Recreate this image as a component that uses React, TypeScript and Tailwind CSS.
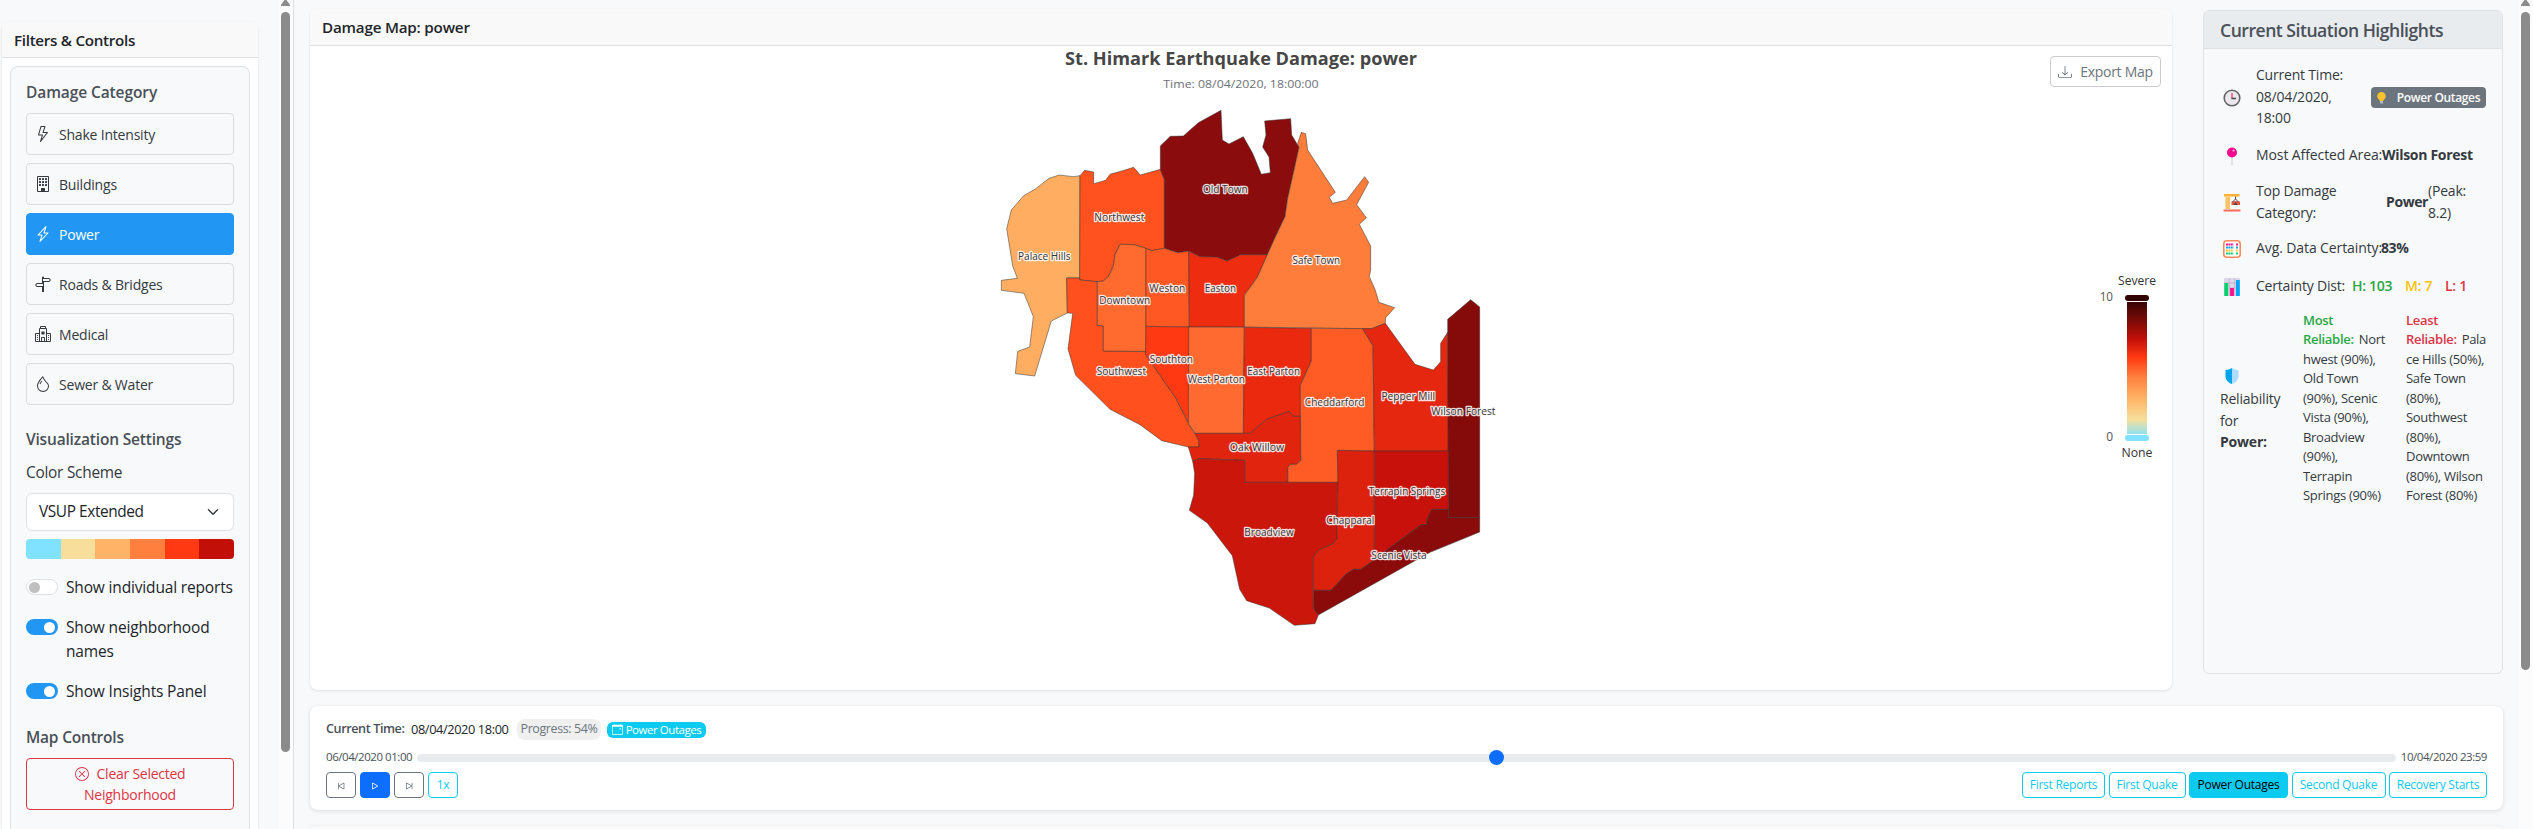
import React from "react";
import {
  BsLightning, BsBuilding, BsLightningCharge, BsSignpostSplit, BsHospital, BsDroplet,
  BsChevronDown, BsXCircle, BsDownload, BsSkipStart, BsPlay, BsSkipEnd, BsCalendarEvent,
} from "react-icons/bs";

const categories = [
  { label: "Shake Intensity", Icon: BsLightning },
  { label: "Buildings", Icon: BsBuilding },
  { label: "Power", Icon: BsLightningCharge, active: true },
  { label: "Roads & Bridges", Icon: BsSignpostSplit },
  { label: "Medical", Icon: BsHospital },
  { label: "Sewer & Water", Icon: BsDroplet },
];

// Map geometry is stored at three units per screen pixel.
const regions = [
  { fill: "#ffad60", pts: "300,437 280,440 238,435 207,445 166,477 131,497 94,540 80,596 98,708 112,745 64,751 64,781 132,790 160,860 149,951 113,964 106,1031 164,1038 214,873 262,849 260,744 299,744" },
  { fill: "#ff521e", pts: "300,437 314,421 341,426 341,461 377,451 390,433 425,423 461,412 481,435 541,418 553,448 553,655 515,662 498,655 462,644 420,643 405,674 400,708 385,740 370,753 352,755 299,750" },
  { fill: "#8b0c0c", pts: "723,241 727,330 747,342 790,320 818,370 844,433 871,428 867,381 848,351 858,315 854,273 932,266 935,315 957,352 940,430 923,505 915,560 890,612 862,674 782,674 741,693 710,681 660,680 626,663 593,668 553,655 553,448 541,418 541,348 571,319 610,318 655,278" },
  { fill: "#ff501d", pts: "260,744 299,744 299,750 352,755 352,886 370,888 370,963 497,964 497,973 588,1105 625,1180 645,1212 656,1232 657,1251 625,1251 545,1232 480,1184 390,1138 287,1036 264,957 278,850 262,849" },
  { fill: "#ff6a2f", pts: "352,755 370,753 385,740 400,708 405,674 420,643 462,644 498,655 498,964 370,963 370,888 352,886" },
  { fill: "#ff5822", pts: "498,655 515,662 553,655 593,668 626,663 628,891 498,889" },
  { fill: "#ee2c10", pts: "626,663 660,680 710,681 741,693 782,674 862,674 832,742 793,796 793,891 628,891" },
  { fill: "#ff7d3a", pts: "953,340 964,307 977,311 983,360 1066,487 1048,502 1058,520 1100,510 1154,440 1166,457 1130,524 1159,563 1138,583 1172,648 1172,720 1168,740 1185,778 1197,817 1244,833 1217,863 1216,880 1175,896 1148,896 793,891 793,796 832,742 862,674 890,612 915,560 923,505 940,430 957,352" },
  { fill: "#ff3a13", pts: "498,889 628,891 626,1180 588,1105 497,973" },
  { fill: "#ff6a30", pts: "626,891 793,892 790,1210 645,1210 625,1180" },
  { fill: "#ea290f", pts: "793,892 994,895 994,993 961,1066 961,1159 940,1159 928,1144 860,1168 810,1210 790,1210" },
  { fill: "#ff5c25", pts: "994,895 1148,896 1179,947 1183,1263 1072,1261 1074,1357 923,1357 923,1312 930,1302 950,1302 962,1290 961,1066 994,993" },
  { fill: "#e5270f", pts: "1148,896 1175,896 1216,880 1305,1003 1360,1020 1382,995 1382,940 1403,907 1405,1263 1183,1263 1179,947" },
  { fill: "#850b0b", pts: "1403,868 1472,809 1499,831 1499,1463 1405,1463" },
  { fill: "#e0240e", pts: "645,1210 790,1210 810,1210 860,1168 928,1144 940,1159 961,1159 962,1290 950,1302 930,1302 923,1312 923,1357 794,1357 794,1291 657,1286 638,1294 625,1251 657,1251 656,1232" },
  { fill: "#cb170b", pts: "638,1294 657,1286 794,1291 794,1357 1074,1357 1071,1527 1060,1541 1015,1561 1001,1580 1000,1736 1015,1755 1005,1781 943,1786 868,1734 800,1712 779,1678 757,1577 682,1479 628,1441 641,1395 644,1330" },
  { fill: "#dc210d", pts: "1072,1261 1183,1263 1183,1590 1142,1618 1120,1618 1097,1633 1053,1681 1001,1681 1001,1580 1015,1561 1060,1541 1071,1527 1074,1357" },
  { fill: "#c7110a", pts: "1183,1263 1405,1263 1405,1438 1355,1438 1342,1465 1340,1484 1323,1484 1220,1560 1183,1590" },
  { fill: "#8b0b0b", pts: "1001,1681 1053,1681 1097,1633 1120,1618 1142,1618 1183,1590 1220,1560 1323,1484 1340,1484 1342,1465 1355,1438 1405,1438 1405,1463 1499,1463 1499,1506 1350,1567 1015,1755 1000,1736" },
];

const labels: [string, number, number, number][] = [
  ["Palace Hills", 193, 679, 158], ["Northwest", 418, 562, 150], ["Old Town", 736, 479, 134],
  ["Downtown", 434, 811, 153], ["Weston", 562, 775, 108], ["Easton", 721, 775, 94],
  ["Safe Town", 1009, 692, 143], ["Southwest", 424, 1024, 148], ["Southton", 574, 988, 130],
  ["West Parton", 709, 1048, 172], ["East Parton", 881, 1024, 158], ["Cheddarford", 1064, 1117, 179],
  ["Pepper Mill", 1285, 1099, 161], ["Wilson Forest", 1450, 1144, 193], ["Oak Willow", 831, 1252, 163],
  ["Broadview", 867, 1507, 148], ["Chapparal", 1111, 1471, 144], ["Terrapin Springs", 1281, 1385, 229],
  ["Scenic Vista", 1257, 1576, 166],
];

function Switch({ on }: { on?: boolean }) {
  return on ? (
    <span className="flex h-4 w-8 shrink-0 items-center justify-end rounded-full bg-[#2196f3] pr-[3px]">
      <span className="size-[11px] rounded-full bg-white" />
    </span>
  ) : (
    <span className="flex h-4 w-8 shrink-0 items-center rounded-full border border-[#dee2e6] bg-white pl-[2px]">
      <span className="size-[11px] rounded-full bg-[#bfbfbf]" />
    </span>
  );
}

function Scrollbar({ thumb }: { thumb: string }) {
  return (
    <div className="flex h-full w-[15px] shrink-0 flex-col items-center bg-[#fcfcfc]">
      <svg className="h-[6px] w-[9px]" viewBox="0 0 9 6"><path d="M3.5 0h2L9 5v1H0V5z" fill="#8b8b8b" /></svg>
      <div className={`mt-[6px] w-[9px] rounded-full bg-[#8b8b8b] ${thumb}`} />
    </div>
  );
}

function Sidebar() {
  return (
    <aside className="flex h-full w-[294px] shrink-0 justify-between border-r border-[#dadde1] pl-[2px]">
      <div className="mt-[22px] h-[807px] w-64 rounded-t-md bg-white shadow-[0_1px_3px_rgba(0,0,0,0.1)]">
        <div className="flex h-9 items-center rounded-t-md border-b border-[#dee0e2] bg-[#f9f9f9] pt-[2px] pl-3">
          <h2 className="text-[15.2px] font-semibold tracking-[-0.3px] text-[#212529]">Filters &amp; Controls</h2>
        </div>
        <div className="mx-2 mt-2 h-[763px] rounded-t-lg border border-b-0 border-[#dee2e6] bg-[#f8f9fb] px-[15px] pt-[14px]">
          <h3 className="h-8 text-[15.5px] leading-[22px] font-semibold tracking-[-0.1px] text-[#495057]">Damage Category</h3>
          <div className="flex flex-col gap-2">
            {categories.map(({ label, Icon, active }) => (
              <div
                key={label}
                className={`flex h-[42px] items-center rounded-[4px] border pl-2 text-[14px] tracking-[-0.2px] ${
                  active ? "border-[#2196f3] bg-[#2196f3] text-white" : "border-[#d9dce1] bg-[#f8f9fb] text-[#343a40]"
                }`}
              >
                <Icon className="size-4" />
                <span className="ml-2">{label}</span>
              </div>
            ))}
          </div>
          <h3 className="mt-[23px] text-[15.5px] leading-[22px] font-semibold tracking-[-0.18px] text-[#495057]">Visualization Settings</h3>
          <div className="mt-3 text-[15.4px] leading-[22px] tracking-[-0.25px] text-[#343a40]">Color Scheme</div>
          <div className="mt-[9px] flex h-[38px] items-center justify-between rounded-md border border-[#dee2e6] bg-white pr-[14px] pl-3 text-[15.4px] tracking-[-0.4px] text-[#212529]">
            <span>VSUP Extended</span>
            <BsChevronDown className="size-3 stroke-1" />
          </div>
          <div className="mt-2 flex h-5 overflow-hidden rounded-[4px]">
            <i className="flex-1 bg-[#80e2ff]" /><i className="flex-1 bg-[#f7df9b]" /><i className="flex-1 bg-[#ffb366]" />
            <i className="flex-1 bg-[#ff803e]" /><i className="flex-1 bg-[#ff3a12]" /><i className="flex-1 bg-[#c20f08]" />
          </div>
          <div className="mt-5 flex gap-2 text-[15.5px] leading-6 tracking-[-0.16px] text-[#212529]">
            <Switch /><span className="-mt-1 whitespace-nowrap">Show individual reports</span>
          </div>
          <div className="mt-5 flex gap-2 text-[15.5px] leading-6 tracking-[-0.16px] text-[#212529]">
            <Switch on /><span className="-mt-1 whitespace-nowrap">Show neighborhood<br />names</span>
          </div>
          <div className="mt-5 flex gap-2 text-[15.5px] leading-6 tracking-[-0.16px] text-[#212529]">
            <Switch on /><span className="-mt-1 whitespace-nowrap">Show Insights Panel</span>
          </div>
          <h3 className="mt-[23px] text-[15.5px] leading-[22px] font-semibold tracking-[-0.2px] text-[#495057]">Map Controls</h3>
          <div className="mt-[10px] flex h-[52px] flex-col items-center justify-center rounded-[4px] border border-[#dc3545] text-[14px] leading-[21px] tracking-[-0.25px] text-[#dc3545]">
            <span className="flex items-center gap-2"><BsXCircle className="size-[14px]" />Clear Selected</span>
            <span>Neighborhood</span>
          </div>
        </div>
      </div>
      <Scrollbar thumb="h-[740px]" />
    </aside>
  );
}

function MapCard() {
  return (
    <section className="flex h-[681px] w-[1862px] flex-col overflow-hidden rounded-lg bg-white shadow-[0_1px_3px_rgba(0,0,0,0.1)]">
      <div className="flex h-[37px] shrink-0 items-center border-b border-[#dee0e2] bg-[#f9f9f9] pt-px pl-3">
        <h2 className="text-[15.2px] font-semibold tracking-[-0.2px] text-[#212529]">Damage Map: power</h2>
      </div>
      <div className="relative h-[644px]">
        <svg className="h-[644px] w-[1862px] [font-family:'Open_Sans','Noto_Sans',sans-serif]" viewBox="-2010 48 5586 1932">
          <text x="783" y="105" textAnchor="middle" textLength="1056" lengthAdjust="spacingAndGlyphs" fontSize="53" fontWeight="700" fill="#464646">St. Himark Earthquake Damage: power</text>
          <text x="783" y="174" textAnchor="middle" textLength="466" lengthAdjust="spacingAndGlyphs" fontSize="35" fill="#6e7079">Time: 08/04/2020, 18:00:00</text>
          {regions.map((r) => (
            <polygon key={r.fill + r.pts.length} points={r.pts} fill={r.fill} stroke="#333" strokeOpacity="0.5" strokeWidth="3" />
          ))}
          {labels.map(([name, x, y, w]) => (
            <text key={name} x={x} y={y + 10} textAnchor="middle" textLength={w} lengthAdjust="spacingAndGlyphs" fontSize="31" fill="#333" stroke="#fff" strokeOpacity="0.85" strokeWidth="8" strokeLinejoin="round" paintOrder="stroke">
              {name}
            </text>
          ))}
          <defs>
            <linearGradient id="scale" x1="0" y1="0" x2="0" y2="1">
              <stop offset="0" stopColor="#3a0404" />
              <stop offset="0.13" stopColor="#740a08" />
              <stop offset="0.28" stopColor="#c20f08" />
              <stop offset="0.42" stopColor="#ff3a12" />
              <stop offset="0.57" stopColor="#ff803e" />
              <stop offset="0.73" stopColor="#ffb366" />
              <stop offset="0.89" stopColor="#f7df9b" />
              <stop offset="1" stopColor="#90e2ee" />
            </linearGradient>
          </defs>
          <g fill="#333" fontSize="36">
            <text x="3471" y="766" textAnchor="middle" textLength="114" lengthAdjust="spacingAndGlyphs">Severe</text>
            <text x="3399" y="813" textAnchor="end" textLength="40" lengthAdjust="spacingAndGlyphs" fill="#555">10</text>
            <text x="3399" y="1233" textAnchor="end" fill="#555">0</text>
            <text x="3471" y="1281" textAnchor="middle" textLength="93" lengthAdjust="spacingAndGlyphs">None</text>
            <rect x="3441" y="816" width="60" height="396" fill="url(#scale)" />
            <rect x="3435" y="795" width="72" height="18" rx="9" fill="#2f0303" />
            <rect x="3435" y="1215" width="72" height="18" rx="9" fill="#80e2ff" />
          </g>
        </svg>
        <button className="absolute top-[10px] right-[11px] flex h-[31px] w-[111px] items-center justify-center gap-2 rounded-[4px] border border-[#ccc] bg-white text-[14px] tracking-[-0.3px] whitespace-nowrap text-[#6c757d]">
          <BsDownload className="size-[14px]" />Export Map
        </button>
      </div>
    </section>
  );
}

function ClockIcon() {
  return (
    <svg className="size-[18px]" viewBox="0 0 18 18" fill="none">
      <circle cx="9" cy="9" r="7.800" fill="#eae8ee" stroke="#636363" strokeWidth="1.6" />
      <path d="M9 4v5.500" stroke="#e5405e" strokeWidth="1.3" /><path d="M8.500 9.500H13" stroke="#444" strokeWidth="1.3" />
    </svg>
  );
}
function PinIcon() {
  return (
    <svg className="size-[18px]" viewBox="0 0 18 18">
      <path d="M8.400 9h1.200v9H8.400z" fill="#d3d3d8" /><circle cx="9" cy="5.500" r="5" fill="#f70a8d" /><circle cx="10.500" cy="3.600" r="1.200" fill="#ff8ac4" />
    </svg>
  );
}
function CraneIcon() {
  return (
    <svg className="size-[18px]" viewBox="0 0 18 18">
      <path d="M1 0h15.500v2.500H1z" fill="#ffb02e" /><path d="M2.500 2.500h4.500V15H2.500z" fill="#ffd27a" />
      <path d="M2.500 3L7 6l-4.500 3L7 12l-4.500 3M7 3L2.500 6 7 9l-4.500 3L7 15" stroke="#f5b04b" fill="none" strokeWidth=".7" />
      <path d="M12.500 2.500V5l-3 3h6l-3-3" stroke="#46464e" fill="none" /><path d="M8.500 7.500H17v3.500H8.500z" fill="#e8523a" />
      <path d="M10.500 11l2-3 2 3z" fill="#46464e" /><path d="M.5 15.500h17v2H.5z" fill="#fb6a5e" />
    </svg>
  );
}
function AbacusIcon() {
  return (
    <svg className="size-[18px]" viewBox="0 0 18 18">
      <rect x=".8" y=".8" width="16.400" height="16.400" rx="3" fill="#fff" stroke="#ff8a5c" strokeWidth="1.6" />
      <g strokeWidth="2" strokeDasharray="2 .4">
        <path d="M3 4.600h7.500M13 4.600h2.400" stroke="#f0148c" /><path d="M3 7.600h7.500M13 7.600h2.400" stroke="#1ba3ee" />
        <path d="M3 10.600h7.500M13 10.600h2.400" stroke="#f8cb45" /><path d="M3 13.600h7.500M13 13.600h2.400" stroke="#13cf78" />
      </g>
    </svg>
  );
}
function ChartIcon() {
  return (
    <svg className="size-[18px]" viewBox="0 0 18 18">
      <rect x="1" width="16" height="18" rx="1" fill="#e0d6ea" /><path d="M1 5h16M1 10h16M6.300 0v18M11.700 0v18" stroke="#b9a8c9" strokeWidth=".7" />
      <path d="M1.300 5h3.800v13H1.300z" fill="#06d16b" /><path d="M7.100 10h3.800v8H7.100z" fill="#f8128a" /><path d="M13 2h3.800v16H13z" fill="#06a5f5" />
    </svg>
  );
}
function ShieldIcon() {
  return (
    <svg className="size-[18px]" viewBox="0 0 18 18">
      <path d="M9 1C7 2.200 4.700 3 2.500 3v6c0 4 3 7 6.500 8z" fill="#00a3ee" /><path d="M9 1c2 1.200 4.300 2 6.500 2v6c0 4-3 7-6.500 8z" fill="#aedcff" />
    </svg>
  );
}
function BulbIcon() {
  return (
    <svg className="h-3 w-[9px]" viewBox="0 0 9 12">
      <path d="M4.500 0a4.200 4.200 0 0 1 2.300 7.700L6.200 9H2.800l-.6-1.300A4.200 4.200 0 0 1 4.500 0z" fill="#fcc32c" /><path d="M3 9h3v2.500H3z" fill="#b5b5bb" />
    </svg>
  );
}

const most = ["hwest (90%),", "Old Town", "(90%), Scenic", "Vista (90%),", "Broadview", "(90%),", "Terrapin", "Springs (90%)"];
const least = ["ce Hills (50%),", "Safe Town", "(80%),", "Southwest", "(80%),", "Downtown", "(80%), Wilson", "Forest (80%)"];

function Highlights() {
  return (
    <section className="mt-px h-[664px] w-[300px] overflow-hidden rounded-md border border-[#dee2e6] bg-[#f8f9fb]">
      <div className="flex h-[38px] items-center border-b border-[#dee2e6] bg-[#e9ecef] pt-[2px] pl-4">
        <h2 className="text-[17.6px] font-semibold tracking-[-0.5px] whitespace-nowrap text-[#495057]">Current Situation Highlights</h2>
      </div>
      <div className="px-4 pt-[15px] text-[14px] leading-[21.500px] tracking-[-0.2px] whitespace-nowrap text-[#343a40]">
        <div className="flex h-[65px] items-center">
          <span className="flex w-9 pt-[2px] pl-[3px]"><ClockIcon /></span>
          <span className="flex-1">Current Time:<br />08/04/2020,<br />18:00</span>
          <span className="mt-[2px] flex h-[21px] w-[115px] items-center justify-center gap-[11px] rounded-[4px] bg-[#6c757d] text-[12px] font-semibold tracking-[-0.35px] text-white"><BulbIcon />Power Outages</span>
        </div>
        <div className="mt-[15px] flex h-[21px] items-center">
          <span className="flex w-9 pt-[2px] pl-[3px]"><PinIcon /></span>
          <span className="w-[126px] tracking-[-0.1px]">Most Affected Area:</span><b className="tracking-[-0.3px]">Wilson Forest</b>
        </div>
        <div className="mt-[15px] flex h-[43px] items-center">
          <span className="flex w-9 pt-[2px] pl-[3px]"><CraneIcon /></span>
          <span className="w-[130px]">Top Damage<br />Category:</span><b className="w-[42px] tracking-[-0.4px]">Power</b><span>(Peak:<br />8.2)</span>
        </div>
        <div className="mt-[14px] flex h-[21px] items-center">
          <span className="flex w-9 pt-[2px] pl-[3px]"><AbacusIcon /></span>
          <span className="w-[125px] tracking-[-0.1px]">Avg. Data Certainty:</span><b className="tracking-[-0.4px]">83%</b>
        </div>
        <div className="mt-[17px] flex h-[21px] items-center">
          <span className="flex w-9 pt-[2px] pl-[3px]"><ChartIcon /></span>
          <span className="w-[96px]">Certainty Dist:</span>
          <span className="w-[53px] font-semibold tracking-[-0.3px] text-[#28a745]">H: 103</span>
          <span className="w-[40px] font-semibold tracking-[-0.3px] text-[#ffc107]">M: 7</span>
          <span className="font-semibold tracking-[-0.3px] text-[#dc3545]">L: 1</span>
        </div>
        <div className="mt-[14px] flex h-[196px] items-center">
          <div className="w-[83px] pt-1"><span className="flex h-[21px] pl-[3px]"><ShieldIcon /></span>Reliability<br />for<br /><b>Power:</b></div>
          <div className="w-[103px] text-[13px] leading-[19.500px] tracking-[-0.3px]">
            <span className="font-semibold text-[#28a745]">Most<br />Reliable:</span><span className="ml-[5px]">Nort</span>
            {most.map((l, i) => <div key={i}>{l}</div>)}
          </div>
          <div className="text-[13px] leading-[19.500px] tracking-[-0.3px]">
            <span className="font-semibold text-[#dc3545]">Least<br />Reliable:</span><span className="ml-[5px]">Pala</span>
            {least.map((l, i) => <div key={i}>{l}</div>)}
          </div>
        </div>
      </div>
    </section>
  );
}

function Timeline() {
  const events: [string, string][] = [
    ["First Reports", "w-[83px]"], ["First Quake", "w-[77px]"], ["Power Outages", "w-[99px]"],
    ["Second Quake", "w-[94px]"], ["Recovery Starts", "w-[98px]"],
  ];
  const btn = "flex h-[26px] w-[30px] items-center justify-center rounded-[4px] border";
  return (
    <section className="mt-4 h-[104px] w-[2193px] rounded-lg bg-white px-4 pt-[13px] tracking-[-0.25px] whitespace-nowrap shadow-[0_1px_4px_rgba(0,0,0,0.12)]">
      <div className="flex h-[21px] items-center text-[13px]">
        <span className="w-[85px] text-[12.600px] font-semibold tracking-[-0.4px] text-[#495057]">Current Time:</span>
        <span className="w-[106px] text-[12.800px] tracking-[-0.4px] text-[#212529]">08/04/2020 18:00</span>
        <span className="flex h-[21px] w-[84px] items-center justify-center rounded-lg bg-[#f0f0f0] text-[12.500px] tracking-[-0.4px] text-[#6c757d]">Progress: 54%</span>
        <span className="ml-[6px] flex h-4 w-[99px] items-center justify-center gap-[3px] rounded-md bg-[#0dcaf0] text-[11.500px] tracking-[-0.45px] text-white"><BsCalendarEvent className="size-[11px]" />Power Outages</span>
      </div>
      <div className="mt-[9px] flex h-[15px] items-center text-[11.500px] tracking-[-0.45px] text-[#495057]">
        <span className="w-[91px]">06/04/2020 01:00</span>
        <div className="relative mt-[3px] h-2 w-[1979px] rounded-full bg-[#e9ecef]">
          <span className="absolute -top-[4px] left-[1072px] size-[15px] rounded-full bg-[#0d6efd]" />
        </div>
        <span className="flex-1 text-right">10/04/2020 23:59</span>
      </div>
      <div className="mt-2 flex justify-between text-[12px]">
        <div className="flex gap-1">
          <span className={`${btn} border-[#6c757d] text-[#6c757d]`}><BsSkipStart className="mt-[2px] size-3" /></span>
          <span className={`${btn} border-[#0d6efd] bg-[#0d6efd] text-white`}><BsPlay className="mt-[2px] size-3" /></span>
          <span className={`${btn} border-[#6c757d] text-[#6c757d]`}><BsSkipEnd className="mt-[2px] size-3" /></span>
          <span className={`${btn} border-[#0dcaf0] text-[#0dcaf0]`}>1x</span>
        </div>
        <div className="flex gap-[3.500px]">
          {events.map(([e, w]) => (
            <span key={e} className={`flex h-[26px] items-center justify-center rounded-[4px] border border-[#0dcaf0] ${w} ${e === "Power Outages" ? "bg-[#0dcaf0] text-black" : "text-[#0dcaf0]"}`}>{e}</span>
          ))}
        </div>
      </div>
    </section>
  );
}

export default function App() {
  return (
    <div className="flex h-[829px] w-[2533px] overflow-hidden bg-[#f8f9fb] [font-family:'Open_Sans','Noto_Sans',sans-serif] [font-stretch:93%]">
      <Sidebar />
      <main className="flex-1 pt-[9px] pl-4">
        <div className="flex gap-[31px]"><MapCard /><Highlights /></div>
        <Timeline />
        <div className="mt-4 h-[4px] w-[2193px] rounded-t-lg bg-[#f9f9f9] shadow-[0_0_3px_rgba(0,0,0,0.08)]" />
      </main>
      <Scrollbar thumb="h-[658px]" />
    </div>
  );
}
